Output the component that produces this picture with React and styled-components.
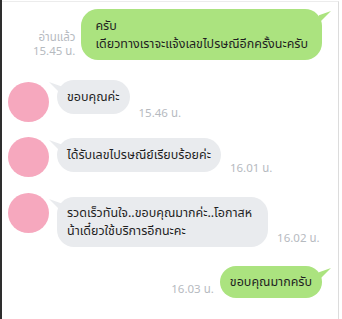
import React from 'react';
import styled, { createGlobalStyle } from 'styled-components';

const GlobalStyle = createGlobalStyle`
    html, body {
        margin: 0;
        padding: 0;
        background: #fff;
    }
    body {
        font-family: "Noto Sans", "Noto Sans Thai", "Liberation Sans", sans-serif;
    }
`;

const Frame = styled.div`
    width: 342px;
    height: 319px;
    box-sizing: border-box;
    border-left: 2px solid #2e2e2e;
    border-right: 3px solid #fff;
    background: #fff;
    overflow: hidden;
`;

const Chat = styled.div`
    height: 100%;
    box-sizing: border-box;
    border-top: 1px solid #ececec;
    border-right: 1px solid #dcdcdc;
    margin-top: 1px;
    display: flex;
    flex-direction: column;
    padding-top: 7px;
`;

const Row = styled.div`
    display: flex;
    align-items: flex-start;
    margin-top: ${p => p.top || 0}px;
    justify-content: ${p => (p.out ? 'flex-end' : 'flex-start')};
    padding: ${p => (p.out ? '0 16px 0 0' : '0 0 0 6px')};
`;

const Avatar = styled.div`
    width: 41px;
    height: 40px;
    border-radius: 50%;
    background: #f6a8be;
    flex-shrink: 0;
    margin-top: ${p => p.top || 0}px;
`;

const Bubble = styled.div`
    position: relative;
    margin-top: ${p => p.top || 0}px;
    margin-left: ${p => (p.out ? 0 : 8)}px;
    padding: ${p => p.pad || '8px 10px'};
    border-radius: 17px;
    background: ${p => (p.out ? '#abe37f' : '#e9ebee')};
    color: #1f1f1f;
    font-size: 12.5px;
    line-height: 18px;
    white-space: nowrap;

    &::before {
        content: '';
        position: absolute;
        top: 2px;
        width: 12px;
        height: 12px;
        background: inherit;
        ${p => (p.out
        ? 'right: -9px; clip-path: polygon(0 35%, 100% 0, 0 100%);'
        : 'left: -8px; clip-path: polygon(100% 35%, 0 0, 100% 100%);')}
    }
`;

const Meta = styled.div`
    display: flex;
    flex-direction: column;
    align-items: ${p => (p.out ? 'flex-end' : 'flex-start')};
    align-self: flex-end;
    margin: ${p => (p.out ? '0 6px 2px 0' : '0 0 2px 9px')};
    color: #b6babf;
    font-size: 11.5px;
    line-height: 14px;
    white-space: nowrap;
`;

const Out = ({ top, lines, read, time, pad }) => (
    <Row out top={top}>
        <Meta out>
            {read && <span>{read}</span>}
            <span>{time}</span>
        </Meta>
        <Bubble out pad={pad}>
            {lines.map((l, i) => <div key={i}>{l}</div>)}
        </Bubble>
    </Row>
);

const In = ({ top, avatarTop, bubbleTop, lines, time, pad }) => (
    <Row top={top}>
        <Avatar top={avatarTop} />
        <Bubble top={bubbleTop} pad={pad}>
            {lines.map((l, i) => <div key={i}>{l}</div>)}
        </Bubble>
        <Meta>
            <span>{time}</span>
        </Meta>
    </Row>
);

const App = () => (
    <>
        <GlobalStyle />
        <Frame>
            <Chat>
                <Out
                    top={0}
                    read="อ่านแล้ว"
                    time="15.45 น."
                    pad="8px 14px 7px 14px"
                    lines={['ครับ', 'เดียวทางเราจะแจ้งเลขไปรษณีอีกครั้งนะครับ']}
                />
                <In top={20} avatarTop={2} bubbleTop={0} time="15.46 น." lines={['ขอบคุณค่ะ']} />
                <In top={15} avatarTop={0} bubbleTop={1} time="16.01 น." lines={['ได้รับเลขไปรษณีย์เรียบร้อยค่ะ']} />
                <In
                    top={16}
                    avatarTop={0}
                    bubbleTop={4}
                    pad="7px 16px 7px 10px"
                    time="16.02 น."
                    lines={['รวดเร็วทันใจ..ขอบคุณมากค่ะ..โอกาสห', 'น้าเดี๋ยวใช้บริการอีกนะคะ']}
                />
                <Out top={19} time="16.03 น." pad="7px 10px" lines={['ขอบคุณมากครับ']} />
            </Chat>
        </Frame>
    </>
);

export default App;
